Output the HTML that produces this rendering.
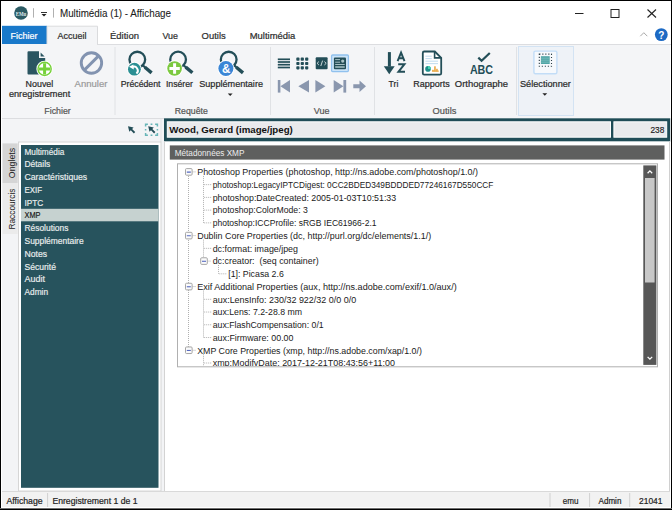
<!DOCTYPE html>
<html><head><meta charset="utf-8"><title>Multimédia (1) - Affichage</title>
<style>html,body{margin:0;padding:0;width:672px;height:510px;overflow:hidden;background:#fff;font-family:"Liberation Sans",sans-serif}svg{display:block}</style>
</head><body>
<svg width="672" height="510" viewBox="0 0 672 510">
<defs><clipPath id="treeclip"><rect x="178" y="164.5" width="465" height="201.5"/></clipPath></defs>
<rect x="0" y="0" width="672" height="510" fill="#ffffff" rx="0" />
<rect x="2" y="44" width="668" height="74" fill="#f4f5f7" rx="0" />
<line x1="97" y1="44.5" x2="671" y2="44.5" stroke="#dcdde0" stroke-width="1" />
<line x1="2" y1="118.5" x2="164" y2="118.5" stroke="#dcdde0" stroke-width="1" />
<rect x="2" y="119" width="162" height="372" fill="#f3f4f6" rx="0" />
<circle cx="21" cy="13" r="6.8" fill="#2b5b64"/>
<text x="21" y="15.6" font-family="Liberation Serif" font-size="6.4" fill="#dfe9ea" font-weight="700" text-anchor="middle" textLength="10.6" lengthAdjust="spacingAndGlyphs" >EMu</text>
<line x1="33.5" y1="8.2" x2="33.5" y2="17.6" stroke="#b0b0b0" stroke-width="1" />
<line x1="41" y1="12.5" x2="47" y2="12.5" stroke="#333" stroke-width="1" />
<path d="M41.5 14 L46.5 14 L44 16.6 Z" fill="#222"/>
<line x1="53.5" y1="8.2" x2="53.5" y2="17.6" stroke="#b0b0b0" stroke-width="1" />
<text x="60" y="17.2" font-family="Liberation Sans" font-size="10.2" fill="#1b1b1b" font-weight="400" text-anchor="start" textLength="111" lengthAdjust="spacingAndGlyphs"  stroke="#1b1b1b" stroke-width="0.08">Multimédia (1) - Affichage</text>
<line x1="575" y1="13.5" x2="583.5" y2="13.5" stroke="#222" stroke-width="1" />
<rect x="611" y="9.5" width="8" height="8" fill="none" stroke="#222" stroke-width="1" rx="0" />
<line x1="647.5" y1="9.5" x2="656" y2="17.5" stroke="#222" stroke-width="1.1" />
<line x1="656" y1="9.5" x2="647.5" y2="17.5" stroke="#222" stroke-width="1.1" />
<rect x="2" y="25.8" width="45" height="18.2" fill="#1979ca" rx="0" />
<text x="10.6" y="38.6" font-family="Liberation Sans" font-size="9.5" fill="#ffffff" font-weight="400" text-anchor="start" textLength="27" lengthAdjust="spacingAndGlyphs"  stroke="#ffffff" stroke-width="0.22">Fichier</text>
<path d="M47 44 L47 26.2 L97.5 26.2 L97.5 44" fill="#f4f5f7" stroke="#dadbdd" stroke-width="1"/>
<text x="57.6" y="39" font-family="Liberation Sans" font-size="9.5" fill="#2e2e2e" font-weight="400" text-anchor="start" textLength="28.8" lengthAdjust="spacingAndGlyphs"  stroke="#2e2e2e" stroke-width="0.22">Accueil</text>
<text x="110" y="39" font-family="Liberation Sans" font-size="9.5" fill="#2e2e2e" font-weight="400" text-anchor="start" textLength="29" lengthAdjust="spacingAndGlyphs"  stroke="#2e2e2e" stroke-width="0.22">Édition</text>
<text x="162.5" y="39" font-family="Liberation Sans" font-size="9.5" fill="#2e2e2e" font-weight="400" text-anchor="start" textLength="15.5" lengthAdjust="spacingAndGlyphs"  stroke="#2e2e2e" stroke-width="0.22">Vue</text>
<text x="201.6" y="39" font-family="Liberation Sans" font-size="9.5" fill="#2e2e2e" font-weight="400" text-anchor="start" textLength="24.1" lengthAdjust="spacingAndGlyphs"  stroke="#2e2e2e" stroke-width="0.22">Outils</text>
<text x="249.75" y="39" font-family="Liberation Sans" font-size="9.5" fill="#2e2e2e" font-weight="400" text-anchor="start" textLength="45.6" lengthAdjust="spacingAndGlyphs"  stroke="#2e2e2e" stroke-width="0.22">Multimédia</text>
<path d="M640.3 36.2 L643.8 32.7 L647.3 36.2" fill="none" stroke="#a8a8a8" stroke-width="1"/>
<circle cx="661.3" cy="34.6" r="6.4" fill="#1d6ac4"/>
<text x="661.3" y="38.6" font-family="Liberation Sans" font-size="10" fill="#ffffff" font-weight="700" text-anchor="middle" >?</text>
<line x1="115" y1="47" x2="115" y2="115" stroke="#e0e2e5" stroke-width="1" />
<line x1="270.5" y1="47" x2="270.5" y2="115" stroke="#e0e2e5" stroke-width="1" />
<line x1="374.5" y1="47" x2="374.5" y2="115" stroke="#e0e2e5" stroke-width="1" />
<line x1="516.5" y1="47" x2="516.5" y2="115" stroke="#e0e2e5" stroke-width="1" />
<text x="44.3" y="113.7" font-family="Liberation Sans" font-size="9.3" fill="#555555" font-weight="400" text-anchor="start" textLength="26.5" lengthAdjust="spacingAndGlyphs"  stroke="#555555" stroke-width="0.22">Fichier</text>
<text x="174.8" y="113.7" font-family="Liberation Sans" font-size="9.3" fill="#555555" font-weight="400" text-anchor="start" textLength="33" lengthAdjust="spacingAndGlyphs"  stroke="#555555" stroke-width="0.22">Requête</text>
<text x="313.75" y="113.7" font-family="Liberation Sans" font-size="9.3" fill="#555555" font-weight="400" text-anchor="start" textLength="15.75" lengthAdjust="spacingAndGlyphs"  stroke="#555555" stroke-width="0.22">Vue</text>
<text x="432.6" y="113.7" font-family="Liberation Sans" font-size="9.3" fill="#555555" font-weight="400" text-anchor="start" textLength="23.8" lengthAdjust="spacingAndGlyphs"  stroke="#555555" stroke-width="0.22">Outils</text>
<text x="25.6" y="87.4" font-family="Liberation Sans" font-size="9.5" fill="#2a2a2a" font-weight="400" text-anchor="start" textLength="27.7" lengthAdjust="spacingAndGlyphs"  stroke="#2a2a2a" stroke-width="0.22">Nouvel</text>
<text x="8.9" y="97.4" font-family="Liberation Sans" font-size="9.5" fill="#2a2a2a" font-weight="400" text-anchor="start" textLength="61.3" lengthAdjust="spacingAndGlyphs"  stroke="#2a2a2a" stroke-width="0.22">enregistrement</text>
<text x="74.6" y="87.4" font-family="Liberation Sans" font-size="9.5" fill="#9a9a9a" font-weight="400" text-anchor="start" textLength="32.8" lengthAdjust="spacingAndGlyphs"  stroke="#9a9a9a" stroke-width="0.22">Annuler</text>
<text x="120.7" y="87.4" font-family="Liberation Sans" font-size="9.5" fill="#2a2a2a" font-weight="400" text-anchor="start" textLength="39.8" lengthAdjust="spacingAndGlyphs"  stroke="#2a2a2a" stroke-width="0.22">Précédent</text>
<text x="165.9" y="87.4" font-family="Liberation Sans" font-size="9.5" fill="#2a2a2a" font-weight="400" text-anchor="start" textLength="27.1" lengthAdjust="spacingAndGlyphs"  stroke="#2a2a2a" stroke-width="0.22">Insérer</text>
<text x="199.2" y="87.4" font-family="Liberation Sans" font-size="9.5" fill="#2a2a2a" font-weight="400" text-anchor="start" textLength="63.8" lengthAdjust="spacingAndGlyphs"  stroke="#2a2a2a" stroke-width="0.22">Supplémentaire</text>
<path d="M227.8 93.5 L232.6 93.5 L230.2 96 Z" fill="#222"/>
<text x="388.6" y="87.4" font-family="Liberation Sans" font-size="9.5" fill="#2a2a2a" font-weight="400" text-anchor="start" textLength="9.7" lengthAdjust="spacingAndGlyphs"  stroke="#2a2a2a" stroke-width="0.22">Tri</text>
<text x="413.2" y="87.4" font-family="Liberation Sans" font-size="9.5" fill="#2a2a2a" font-weight="400" text-anchor="start" textLength="36.5" lengthAdjust="spacingAndGlyphs"  stroke="#2a2a2a" stroke-width="0.22">Rapports</text>
<text x="454.8" y="87.4" font-family="Liberation Sans" font-size="9.5" fill="#2a2a2a" font-weight="400" text-anchor="start" textLength="53.2" lengthAdjust="spacingAndGlyphs"  stroke="#2a2a2a" stroke-width="0.22">Orthographe</text>
<rect x="518.5" y="46.5" width="55" height="69" fill="#eef2f7" stroke="#d3e3f3" stroke-width="1" rx="0" />
<rect x="533.9" y="51.1" width="23" height="22.7" fill="#f6f9fc" stroke="#c2ddf7" stroke-width="1.4" rx="1.5" />
<text x="520" y="87.4" font-family="Liberation Sans" font-size="9.5" fill="#2a2a2a" font-weight="400" text-anchor="start" textLength="50.9" lengthAdjust="spacingAndGlyphs"  stroke="#2a2a2a" stroke-width="0.22">Sélectionner</text>
<path d="M542.4 93.3 L547.2 93.3 L544.8 95.8 Z" fill="#222"/>
<path d="M28.5 51.2 L39 51.2 L39 58 L45.2 58 L45.2 73.5 Q45.2 74.5 44.2 74.5 L28.5 74.5 Q27.5 74.5 27.5 73.5 L27.5 52.2 Q27.5 51.2 28.5 51.2 Z" fill="#2a5561"/>
<path d="M40.6 52.6 L44.6 56.6 L40.6 56.6 Z" fill="#2a5561"/>
<circle cx="44.6" cy="68.9" r="8.2" fill="#ffffff"/>
<circle cx="44.6" cy="68.9" r="6.6" fill="#ffffff" stroke="#76d13a" stroke-width="1.4"/>
<path d="M44.6 63.2 V74.6 M38.9 68.9 H50.3" stroke="#76d13a" stroke-width="3"/>
<circle cx="91.45" cy="63" r="10.2" fill="none" stroke="#8293b0" stroke-width="2.9"/>
<path d="M98.6 55.9 L84.3 70.1" stroke="#8293b0" stroke-width="2.9"/>
<circle cx="137.3" cy="59.6" r="7.85" fill="none" stroke="#234e58" stroke-width="2.3"/>
<path d="M142.3 64.9 L145.5 67.8" stroke="#234e58" stroke-width="2.2"/>
<path d="M144.9 67.2 L151.60000000000002 72.9" stroke="#234e58" stroke-width="3.4"/>
<circle cx="134.4" cy="69.2" r="7.4" fill="#ffffff"/>
<circle cx="134.4" cy="69.2" r="6.4" fill="#2a8f93"/>
<path d="M132.2 67.1 A3.9 3.9 0 0 1 136.4 73.6" fill="none" stroke="#ffffff" stroke-width="1.9"/>
<path d="M129 66.8 L133.4 64.4 L133.8 69.6 Z" fill="#ffffff"/>
<circle cx="178.1" cy="59.5" r="7.85" fill="none" stroke="#234e58" stroke-width="2.3"/>
<path d="M183.1 64.8 L186.29999999999998 67.7" stroke="#234e58" stroke-width="2.2"/>
<path d="M185.7 67.1 L192.4 72.8" stroke="#234e58" stroke-width="3.4"/>
<circle cx="174.6" cy="68.5" r="8.3" fill="#ffffff"/>
<circle cx="174.6" cy="68.5" r="7.3" fill="#7cc940"/>
<path d="M174.6 63.3 V73.7 M169.4 68.5 H179.8" stroke="#ffffff" stroke-width="3"/>
<circle cx="228.7" cy="59.6" r="7.85" fill="none" stroke="#234e58" stroke-width="2.3"/>
<path d="M233.7 64.9 L236.89999999999998 67.8" stroke="#234e58" stroke-width="2.2"/>
<path d="M236.29999999999998 67.2 L243.0 72.9" stroke="#234e58" stroke-width="3.4"/>
<circle cx="225.9" cy="68.5" r="8.4" fill="#ffffff"/>
<circle cx="225.9" cy="68.5" r="7.5" fill="#3a86d6"/>
<text x="226.1" y="73.4" font-family="Liberation Sans" font-size="13.2" fill="#ffffff" font-weight="700" text-anchor="middle" textLength="8.4" lengthAdjust="spacingAndGlyphs" >&amp;</text>
<line x1="277.8" y1="59.3" x2="290" y2="59.3" stroke="#234e58" stroke-width="1.7" />
<line x1="277.8" y1="62.0" x2="290" y2="62.0" stroke="#234e58" stroke-width="1.7" />
<line x1="277.8" y1="64.7" x2="290" y2="64.7" stroke="#234e58" stroke-width="1.7" />
<line x1="277.8" y1="67.5" x2="290" y2="67.5" stroke="#234e58" stroke-width="1.7" />
<rect x="296.3" y="57.6" width="3.2" height="3.2" fill="#234e58" rx="0.8" />
<rect x="296.3" y="61.9" width="3.2" height="3.2" fill="#234e58" rx="0.8" />
<rect x="296.3" y="66.2" width="3.2" height="3.2" fill="#234e58" rx="0.8" />
<rect x="300.7" y="57.6" width="3.2" height="3.2" fill="#234e58" rx="0.8" />
<rect x="300.7" y="61.9" width="3.2" height="3.2" fill="#234e58" rx="0.8" />
<rect x="300.7" y="66.2" width="3.2" height="3.2" fill="#234e58" rx="0.8" />
<rect x="305.1" y="57.6" width="3.2" height="3.2" fill="#234e58" rx="0.8" />
<rect x="305.1" y="61.9" width="3.2" height="3.2" fill="#234e58" rx="0.8" />
<rect x="305.1" y="66.2" width="3.2" height="3.2" fill="#234e58" rx="0.8" />
<rect x="315.7" y="57.2" width="11.9" height="12.1" fill="#234e58" rx="1" />
<path d="M318.9 61.6 L317.1 63.3 L318.9 65 M324.4 61.6 L326.2 63.3 L324.4 65 M320.8 66 L322.6 60.6" fill="none" stroke="#dfe8e8" stroke-width="0.9"/>
<rect x="331.6" y="55" width="16.8" height="16.6" fill="#cce4f8" stroke="#90c1ee" stroke-width="1.3" rx="1" />
<rect x="333.9" y="57.4" width="12.1" height="11.9" fill="#234e58" rx="1" />
<line x1="335.2" y1="59.6" x2="340" y2="59.6" stroke="#b3cbcf" stroke-width="0.9" />
<line x1="335.2" y1="62.2" x2="340" y2="62.2" stroke="#b3cbcf" stroke-width="0.9" />
<circle cx="342.7" cy="61.1" r="1.6" fill="#a9c3c7"/>
<line x1="335.2" y1="64.5" x2="344.7" y2="64.5" stroke="#b3cbcf" stroke-width="0.9" />
<line x1="335.2" y1="67" x2="344.7" y2="67" stroke="#a9c3c7" stroke-width="1.5" />
<rect x="277.8" y="80" width="2.6" height="12.6" fill="#8a97ae" rx="0" />
<path d="M290 80 L290 92.6 L280.4 86.3 Z" fill="#8a97ae"/>
<path d="M309 80 L309 92.6 L298.3 86.3 Z" fill="#8a97ae"/>
<path d="M315.4 80 L315.4 92.6 L325.4 86.3 Z" fill="#8a97ae"/>
<path d="M333.7 80 L333.7 92.6 L343.4 86.3 Z" fill="#8a97ae"/>
<rect x="343.4" y="80" width="2.8" height="12.6" fill="#8a97ae" rx="0" />
<path d="M353.3 84.3 H359.5 V80.5 L366 86.3 L359.5 92.1 V88.3 H353.3 Z" fill="#8a97ae"/>
<path d="M383.8 66.2 H394.7 L389.25 74.2 Z" fill="#234e58"/>
<rect x="387.9" y="52.1" width="3" height="14.5" fill="#234e58" rx="0" />
<path d="M397.6 61.2 L401.05 52.6 L404.5 61.2 M398.9 58.2 H403.2" fill="none" stroke="#234e58" stroke-width="1.9"/>
<path d="M398.2 64.2 H404.5 L398.4 71.8 H405" fill="none" stroke="#234e58" stroke-width="1.9" stroke-linejoin="miter"/>
<path d="M424.2 51.5 L434.8 51.5 L441.2 57.9 L441.2 73.3 Q441.2 74.7 439.8 74.7 L424.2 74.7 Q422.8 74.7 422.8 73.3 L422.8 52.9 Q422.8 51.5 424.2 51.5 Z" fill="#ffffff" stroke="#234e58" stroke-width="1.8"/>
<path d="M434.6 51.5 L434.6 57.9 L441.2 57.9" fill="none" stroke="#234e58" stroke-width="1.6"/>
<line x1="425.4" y1="56.2" x2="431.8" y2="56.2" stroke="#c6def0" stroke-width="1.1" />
<line x1="425.4" y1="58.6" x2="431.8" y2="58.6" stroke="#c6def0" stroke-width="1.1" />
<line x1="425.4" y1="61.2" x2="438" y2="61.2" stroke="#c6def0" stroke-width="1.1" />
<line x1="425.4" y1="63.6" x2="438" y2="63.6" stroke="#c6def0" stroke-width="1.1" />
<circle cx="428" cy="68.9" r="2.8" fill="#1f8f8c"/>
<path d="M428 66.1 A2.8 2.8 0 0 1 430.8 68.9 L428 68.9 Z" fill="#45d3b0"/>
<rect x="432.2" y="69.8" width="1.5" height="1.8" fill="#e8a23a" rx="0" />
<rect x="434.2" y="66.3" width="1.5" height="5.3" fill="#e8a23a" rx="0" />
<rect x="436.2" y="68.8" width="1.5" height="2.8" fill="#e8a23a" rx="0" />
<rect x="432.2" y="70.6" width="6.7" height="1" fill="#e8a23a" rx="0" />
<path d="M478.3 57.6 L481.6 60.8 L489.8 53" fill="none" stroke="#234e58" stroke-width="2.2"/>
<text x="469.9" y="74.3" font-family="Liberation Sans" font-size="12.8" fill="#234e58" font-weight="700" text-anchor="start" textLength="23.2" lengthAdjust="spacingAndGlyphs" >ABC</text>
<rect x="539.3" y="54.1" width="12.2" height="12.2" fill="none" stroke="#2d4048" stroke-width="1.1" rx="0" stroke-dasharray="1.1 1.9"/>
<rect x="540.9" y="56.2" width="8.8" height="7.8" fill="#4fa6a6" rx="0" />
<line x1="540.9" y1="58.2" x2="549.7" y2="58.2" stroke="#8fcaca" stroke-width="0.6" />
<line x1="540.9" y1="60.2" x2="549.7" y2="60.2" stroke="#8fcaca" stroke-width="0.6" />
<line x1="540.9" y1="62.2" x2="549.7" y2="62.2" stroke="#8fcaca" stroke-width="0.6" />
<path d="M128 126.2 L133.6 127.5 L132.1 129.0 L135.2 132.1 L133.9 133.4 L130.8 130.3 L129.3 131.8 Z" fill="#234e58"/>
<path d="M148.2 126.2 L153.79999999999998 127.5 L152.29999999999998 129.0 L155.39999999999998 132.1 L154.1 133.4 L151.0 130.3 L149.5 131.8 Z" fill="#234e58"/>
<path d="M145.6 126.4 V124.2 H147.9 M155.1 124.2 H157.4 V126.4 M145.6 132.9 V135.2 H147.9 M155.1 135.2 H157.4 V132.9 M150.6 124.2 H152.4 M150.6 135.2 H152.4 M145.6 128.9 V130.5 M157.4 128.9 V130.5" fill="none" stroke="#68b6b8" stroke-width="1.5"/>
<line x1="161" y1="119" x2="161" y2="142" stroke="#e2e3e5" stroke-width="1" />
<rect x="164" y="118.3" width="506.2" height="23.3" fill="#1f4c56" rx="0" />
<rect x="167.3" y="121.8" width="443.2" height="15.4" fill="#e9eaec" stroke="#ffffff" stroke-width="1" rx="0" />
<rect x="613.9" y="121.8" width="52.8" height="15.4" fill="#e9eaec" stroke="#ffffff" stroke-width="1" rx="0" />
<text x="169.2" y="133.4" font-family="Liberation Sans" font-size="9.8" fill="#111111" font-weight="700" text-anchor="start" textLength="123.6" lengthAdjust="spacingAndGlyphs" >Wood, Gerard (image/jpeg)</text>
<text x="664.3" y="133.1" font-family="Liberation Sans" font-size="9.8" fill="#1a1a1a" font-weight="400" text-anchor="end" textLength="13.9" lengthAdjust="spacingAndGlyphs"  stroke="#1a1a1a" stroke-width="0.15">238</text>
<rect x="164" y="141.5" width="506" height="349.5" fill="#ffffff" rx="0" />
<line x1="669.5" y1="141.5" x2="669.5" y2="491" stroke="#d0d0d0" stroke-width="1" />
<line x1="164.5" y1="141.6" x2="164.5" y2="491" stroke="#d3d3d3" stroke-width="1" />
<rect x="169.8" y="145.4" width="494.7" height="14.2" fill="#5e5f5e" rx="0" />
<text x="174.7" y="155.6" font-family="Liberation Sans" font-size="9.2" fill="#ececec" font-weight="400" text-anchor="start" textLength="69.7" lengthAdjust="spacingAndGlyphs" >Métadonnées XMP</text>
<rect x="177.5" y="163.8" width="480" height="203" fill="#ffffff" stroke="#b0b0b0" stroke-width="1" rx="0" />
<rect x="643.3" y="165.4" width="13.1" height="199.5" fill="#575757" rx="0" />
<rect x="645" y="178" width="9.6" height="104.5" fill="#c8c8c8" rx="0" />
<path d="M647.6 173.2 L649.9 170.9 L652.2 173.2" fill="none" stroke="#ffffff" stroke-width="1.3"/>
<path d="M647.6 356.9 L649.9 359.2 L652.2 356.9" fill="none" stroke="#ffffff" stroke-width="1.3"/>
<g clip-path="url(#treeclip)">
<line x1="188.5" y1="176" x2="188.5" y2="346.86" stroke="#b0b0b0" stroke-width="1" stroke-dasharray="1 1"/>
<rect x="185.5" y="168.6" width="6.6" height="6.6" fill="#fbfbfb" stroke="#a5a5a5" stroke-width="1" rx="1" />
<line x1="186.8" y1="172.1" x2="190.8" y2="172.1" stroke="#5568c0" stroke-width="1.1" />
<line x1="192.5" y1="171.9" x2="196" y2="171.9" stroke="#b0b0b0" stroke-width="1" stroke-dasharray="1 1"/>
<text x="197.2" y="175.2" font-family="Liberation Sans" font-size="9.2" fill="#1a1a1a" font-weight="400" text-anchor="start" textLength="280.8" lengthAdjust="spacingAndGlyphs" >Photoshop Properties (photoshop, http://ns.adobe.com/photoshop/1.0/)</text>
<line x1="204.2" y1="184.64000000000001" x2="211.5" y2="184.64000000000001" stroke="#b0b0b0" stroke-width="1" stroke-dasharray="1 1"/>
<text x="212.7" y="187.94" font-family="Liberation Sans" font-size="9.2" fill="#1a1a1a" font-weight="400" text-anchor="start" textLength="280.7" lengthAdjust="spacingAndGlyphs" >photoshop:LegacyIPTCDigest: 0CC2BDED349BDDDED77246167D550CCF</text>
<line x1="204.2" y1="197.38" x2="211.5" y2="197.38" stroke="#b0b0b0" stroke-width="1" stroke-dasharray="1 1"/>
<text x="212.7" y="200.67999999999998" font-family="Liberation Sans" font-size="9.2" fill="#1a1a1a" font-weight="400" text-anchor="start" textLength="183.5" lengthAdjust="spacingAndGlyphs" >photoshop:DateCreated: 2005-01-03T10:51:33</text>
<line x1="204.2" y1="210.12" x2="211.5" y2="210.12" stroke="#b0b0b0" stroke-width="1" stroke-dasharray="1 1"/>
<text x="212.7" y="213.42" font-family="Liberation Sans" font-size="9.2" fill="#1a1a1a" font-weight="400" text-anchor="start" textLength="95.10000000000002" lengthAdjust="spacingAndGlyphs" >photoshop:ColorMode: 3</text>
<line x1="204.2" y1="222.86" x2="211.5" y2="222.86" stroke="#b0b0b0" stroke-width="1" stroke-dasharray="1 1"/>
<text x="212.7" y="226.16" font-family="Liberation Sans" font-size="9.2" fill="#1a1a1a" font-weight="400" text-anchor="start" textLength="163.90000000000003" lengthAdjust="spacingAndGlyphs" >photoshop:ICCProfile: sRGB IEC61966-2.1</text>
<rect x="185.5" y="232.3" width="6.6" height="6.6" fill="#fbfbfb" stroke="#a5a5a5" stroke-width="1" rx="1" />
<line x1="186.8" y1="235.8" x2="190.8" y2="235.8" stroke="#5568c0" stroke-width="1.1" />
<line x1="192.5" y1="235.60000000000002" x2="196" y2="235.60000000000002" stroke="#b0b0b0" stroke-width="1" stroke-dasharray="1 1"/>
<text x="197.2" y="238.89999999999998" font-family="Liberation Sans" font-size="9.2" fill="#1a1a1a" font-weight="400" text-anchor="start" textLength="234.0" lengthAdjust="spacingAndGlyphs" >Dublin Core Properties (dc, http://purl.org/dc/elements/1.1/)</text>
<line x1="204.2" y1="248.34" x2="211.5" y2="248.34" stroke="#b0b0b0" stroke-width="1" stroke-dasharray="1 1"/>
<text x="212.7" y="251.64" font-family="Liberation Sans" font-size="9.2" fill="#1a1a1a" font-weight="400" text-anchor="start" textLength="85.30000000000001" lengthAdjust="spacingAndGlyphs" >dc:format: image/jpeg</text>
<rect x="200.7" y="257.78000000000003" width="6.6" height="6.6" fill="#fbfbfb" stroke="#a5a5a5" stroke-width="1" rx="1" />
<line x1="202" y1="261.28000000000003" x2="206" y2="261.28000000000003" stroke="#5568c0" stroke-width="1.1" />
<line x1="207.5" y1="261.08000000000004" x2="211" y2="261.08000000000004" stroke="#b0b0b0" stroke-width="1" stroke-dasharray="1 1"/>
<text x="212.7" y="264.38" font-family="Liberation Sans" font-size="9.2" fill="#1a1a1a" font-weight="400" text-anchor="start" textLength="105.90000000000003" lengthAdjust="spacingAndGlyphs" >dc:creator:  (seq container)</text>
<line x1="219.3" y1="273.82" x2="227" y2="273.82" stroke="#b0b0b0" stroke-width="1" stroke-dasharray="1 1"/>
<text x="228.2" y="277.12" font-family="Liberation Sans" font-size="9.2" fill="#1a1a1a" font-weight="400" text-anchor="start" textLength="55.60000000000002" lengthAdjust="spacingAndGlyphs" >[1]: Picasa 2.6</text>
<rect x="185.5" y="283.26" width="6.6" height="6.6" fill="#fbfbfb" stroke="#a5a5a5" stroke-width="1" rx="1" />
<line x1="186.8" y1="286.76" x2="190.8" y2="286.76" stroke="#5568c0" stroke-width="1.1" />
<line x1="192.5" y1="286.56" x2="196" y2="286.56" stroke="#b0b0b0" stroke-width="1" stroke-dasharray="1 1"/>
<text x="197.2" y="289.86" font-family="Liberation Sans" font-size="9.2" fill="#1a1a1a" font-weight="400" text-anchor="start" textLength="259.5" lengthAdjust="spacingAndGlyphs" >Exif Additional Properties (aux, http://ns.adobe.com/exif/1.0/aux/)</text>
<line x1="204.2" y1="299.3" x2="211.5" y2="299.3" stroke="#b0b0b0" stroke-width="1" stroke-dasharray="1 1"/>
<text x="212.7" y="302.6" font-family="Liberation Sans" font-size="9.2" fill="#1a1a1a" font-weight="400" text-anchor="start" textLength="143.5" lengthAdjust="spacingAndGlyphs" >aux:LensInfo: 230/32 922/32 0/0 0/0</text>
<line x1="204.2" y1="312.04" x2="211.5" y2="312.04" stroke="#b0b0b0" stroke-width="1" stroke-dasharray="1 1"/>
<text x="212.7" y="315.34000000000003" font-family="Liberation Sans" font-size="9.2" fill="#1a1a1a" font-weight="400" text-anchor="start" textLength="89.30000000000001" lengthAdjust="spacingAndGlyphs" >aux:Lens: 7.2-28.8 mm</text>
<line x1="204.2" y1="324.78" x2="211.5" y2="324.78" stroke="#b0b0b0" stroke-width="1" stroke-dasharray="1 1"/>
<text x="212.7" y="328.08" font-family="Liberation Sans" font-size="9.2" fill="#1a1a1a" font-weight="400" text-anchor="start" textLength="111.0" lengthAdjust="spacingAndGlyphs" >aux:FlashCompensation: 0/1</text>
<line x1="204.2" y1="337.52" x2="211.5" y2="337.52" stroke="#b0b0b0" stroke-width="1" stroke-dasharray="1 1"/>
<text x="212.7" y="340.82" font-family="Liberation Sans" font-size="9.2" fill="#1a1a1a" font-weight="400" text-anchor="start" textLength="80.80000000000001" lengthAdjust="spacingAndGlyphs" >aux:Firmware: 00.00</text>
<rect x="185.5" y="346.96" width="6.6" height="6.6" fill="#fbfbfb" stroke="#a5a5a5" stroke-width="1" rx="1" />
<line x1="186.8" y1="350.46" x2="190.8" y2="350.46" stroke="#5568c0" stroke-width="1.1" />
<line x1="192.5" y1="350.26" x2="196" y2="350.26" stroke="#b0b0b0" stroke-width="1" stroke-dasharray="1 1"/>
<text x="197.2" y="353.56" font-family="Liberation Sans" font-size="9.2" fill="#1a1a1a" font-weight="400" text-anchor="start" textLength="224.7" lengthAdjust="spacingAndGlyphs" >XMP Core Properties (xmp, http://ns.adobe.com/xap/1.0/)</text>
<line x1="204.2" y1="363.0" x2="211.5" y2="363.0" stroke="#b0b0b0" stroke-width="1" stroke-dasharray="1 1"/>
<text x="212.7" y="366.29999999999995" font-family="Liberation Sans" font-size="9.2" fill="#1a1a1a" font-weight="400" text-anchor="start" textLength="182.2" lengthAdjust="spacingAndGlyphs" >xmp:ModifyDate: 2017-12-21T08:43:56+11:00</text>
<line x1="203.5" y1="175.9" x2="203.5" y2="222.86" stroke="#b0b0b0" stroke-width="1" stroke-dasharray="1 1"/>
<line x1="203.5" y1="239.60000000000002" x2="203.5" y2="257.58000000000004" stroke="#b0b0b0" stroke-width="1" stroke-dasharray="1 1"/>
<line x1="203.5" y1="290.56" x2="203.5" y2="337.52" stroke="#b0b0b0" stroke-width="1" stroke-dasharray="1 1"/>
<line x1="203.5" y1="354.26" x2="203.5" y2="375.74" stroke="#b0b0b0" stroke-width="1" stroke-dasharray="1 1"/>
<line x1="218.5" y1="265.08000000000004" x2="218.5" y2="273.82" stroke="#b0b0b0" stroke-width="1" stroke-dasharray="1 1"/>
</g>
<rect x="2.5" y="143.4" width="15.2" height="39.6" fill="#d5d5d5" rx="0" />
<rect x="2.5" y="183" width="15.2" height="51" fill="#ebebeb" rx="0" />
<text transform="translate(15.4,178.2) rotate(-90)" font-family="Liberation Sans" font-size="9.2" fill="#222" textLength="30.4" lengthAdjust="spacingAndGlyphs">Onglets</text>
<text transform="translate(15.4,229.5) rotate(-90)" font-family="Liberation Sans" font-size="9.2" fill="#222" textLength="41" lengthAdjust="spacingAndGlyphs">Raccourcis</text>
<rect x="18.5" y="142" width="142.5" height="349" fill="#ffffff" stroke="#d6d6d6" stroke-width="1" rx="0" />
<rect x="21" y="145" width="137.5" height="342.8" fill="#27535d" rx="0" />
<rect x="21" y="208.8" width="137.5" height="12.5" fill="#c6d2d0" rx="0" />
<text x="24.5" y="154.5" font-family="Liberation Sans" font-size="8.8" fill="#e9eded" font-weight="400" text-anchor="start" textLength="39.8" lengthAdjust="spacingAndGlyphs"  stroke="#e9eded" stroke-width="0.18">Multimédia</text>
<text x="24.5" y="167.28" font-family="Liberation Sans" font-size="8.8" fill="#e9eded" font-weight="400" text-anchor="start" textLength="25.7" lengthAdjust="spacingAndGlyphs"  stroke="#e9eded" stroke-width="0.18">Détails</text>
<text x="24.5" y="180.06" font-family="Liberation Sans" font-size="8.8" fill="#e9eded" font-weight="400" text-anchor="start" textLength="62.7" lengthAdjust="spacingAndGlyphs"  stroke="#e9eded" stroke-width="0.18">Caractéristiques</text>
<text x="24.5" y="192.84" font-family="Liberation Sans" font-size="8.8" fill="#e9eded" font-weight="400" text-anchor="start" textLength="17.6" lengthAdjust="spacingAndGlyphs"  stroke="#e9eded" stroke-width="0.18">EXIF</text>
<text x="24.5" y="205.62" font-family="Liberation Sans" font-size="8.8" fill="#e9eded" font-weight="400" text-anchor="start" textLength="18.8" lengthAdjust="spacingAndGlyphs"  stroke="#e9eded" stroke-width="0.18">IPTC</text>
<text x="24.5" y="218.4" font-family="Liberation Sans" font-size="8.8" fill="#1a1a1a" font-weight="400" text-anchor="start" textLength="16" lengthAdjust="spacingAndGlyphs"  stroke="#1a1a1a" stroke-width="0.18">XMP</text>
<text x="24.5" y="231.18" font-family="Liberation Sans" font-size="8.8" fill="#e9eded" font-weight="400" text-anchor="start" textLength="43.9" lengthAdjust="spacingAndGlyphs"  stroke="#e9eded" stroke-width="0.18">Résolutions</text>
<text x="24.5" y="243.95999999999998" font-family="Liberation Sans" font-size="8.8" fill="#e9eded" font-weight="400" text-anchor="start" textLength="59.1" lengthAdjust="spacingAndGlyphs"  stroke="#e9eded" stroke-width="0.18">Supplémentaire</text>
<text x="24.5" y="256.74" font-family="Liberation Sans" font-size="8.8" fill="#e9eded" font-weight="400" text-anchor="start" textLength="22.6" lengthAdjust="spacingAndGlyphs"  stroke="#e9eded" stroke-width="0.18">Notes</text>
<text x="24.5" y="269.52" font-family="Liberation Sans" font-size="8.8" fill="#e9eded" font-weight="400" text-anchor="start" textLength="31.4" lengthAdjust="spacingAndGlyphs"  stroke="#e9eded" stroke-width="0.18">Sécurité</text>
<text x="24.5" y="282.3" font-family="Liberation Sans" font-size="8.8" fill="#e9eded" font-weight="400" text-anchor="start" textLength="20.4" lengthAdjust="spacingAndGlyphs"  stroke="#e9eded" stroke-width="0.18">Audit</text>
<text x="24.5" y="295.08" font-family="Liberation Sans" font-size="8.8" fill="#e9eded" font-weight="400" text-anchor="start" textLength="23.5" lengthAdjust="spacingAndGlyphs"  stroke="#e9eded" stroke-width="0.18">Admin</text>
<rect x="2" y="491" width="668" height="16" fill="#f2f2f2" rx="0" />
<line x1="2" y1="491.5" x2="670" y2="491.5" stroke="#d9d9d9" stroke-width="1" />
<text x="6.5" y="504.4" font-family="Liberation Sans" font-size="9" fill="#1f1f1f" font-weight="400" text-anchor="start" textLength="36.1" lengthAdjust="spacingAndGlyphs"  stroke="#1f1f1f" stroke-width="0.22">Affichage</text>
<line x1="47.6" y1="493" x2="47.6" y2="507" stroke="#d0d0d0" stroke-width="1" />
<text x="52.4" y="504.4" font-family="Liberation Sans" font-size="9" fill="#1f1f1f" font-weight="400" text-anchor="start" textLength="85.1" lengthAdjust="spacingAndGlyphs"  stroke="#1f1f1f" stroke-width="0.22">Enregistrement 1 de 1</text>
<line x1="550" y1="493" x2="550" y2="507" stroke="#d0d0d0" stroke-width="1" />
<line x1="589.6" y1="493" x2="589.6" y2="507" stroke="#d0d0d0" stroke-width="1" />
<line x1="629.7" y1="493" x2="629.7" y2="507" stroke="#d0d0d0" stroke-width="1" />
<text x="562.8" y="504.4" font-family="Liberation Sans" font-size="9" fill="#1f1f1f" font-weight="400" text-anchor="start" textLength="15.7" lengthAdjust="spacingAndGlyphs"  stroke="#1f1f1f" stroke-width="0.22">emu</text>
<text x="598.5" y="504.4" font-family="Liberation Sans" font-size="9" fill="#1f1f1f" font-weight="400" text-anchor="start" textLength="22.9" lengthAdjust="spacingAndGlyphs"  stroke="#1f1f1f" stroke-width="0.22">Admin</text>
<text x="639" y="504.4" font-family="Liberation Sans" font-size="9" fill="#1f1f1f" font-weight="400" text-anchor="start" textLength="23.5" lengthAdjust="spacingAndGlyphs"  stroke="#1f1f1f" stroke-width="0.22">21041</text>
<rect x="0" y="0" width="672" height="1" fill="#000" rx="0" />
<rect x="0" y="0" width="1" height="510" fill="#000" rx="0" />
<rect x="671" y="0" width="1" height="510" fill="#000" rx="0" />
<rect x="0" y="509" width="672" height="1" fill="#000" rx="0" />
<rect x="0" y="508" width="672" height="1" fill="#707070" rx="0" />
</svg>
</body></html>
